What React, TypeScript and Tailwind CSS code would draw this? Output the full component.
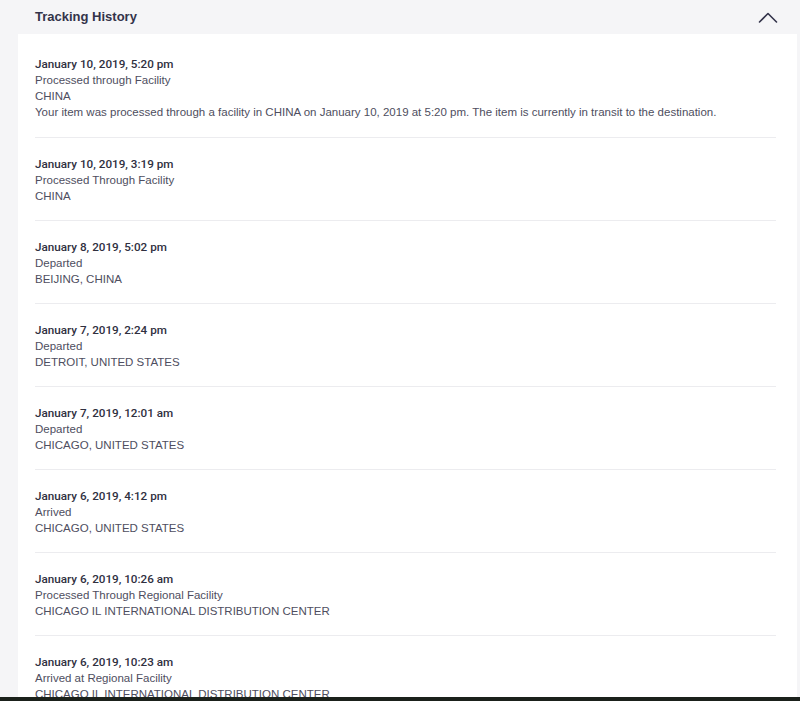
type Event = {
  date: string;
  status: string;
  location: string;
  detail?: string;
};

const EVENTS: Event[] = [
  {
    date: "January 10, 2019, 5:20 pm",
    status: "Processed through Facility",
    location: "CHINA",
    detail:
      "Your item was processed through a facility in CHINA on January 10, 2019 at 5:20 pm. The item is currently in transit to the destination.",
  },
  { date: "January 10, 2019, 3:19 pm", status: "Processed Through Facility", location: "CHINA" },
  { date: "January 8, 2019, 5:02 pm", status: "Departed", location: "BEIJING, CHINA" },
  { date: "January 7, 2019, 2:24 pm", status: "Departed", location: "DETROIT, UNITED STATES" },
  { date: "January 7, 2019, 12:01 am", status: "Departed", location: "CHICAGO, UNITED STATES" },
  { date: "January 6, 2019, 4:12 pm", status: "Arrived", location: "CHICAGO, UNITED STATES" },
  {
    date: "January 6, 2019, 10:26 am",
    status: "Processed Through Regional Facility",
    location: "CHICAGO IL INTERNATIONAL DISTRIBUTION CENTER",
  },
  {
    date: "January 6, 2019, 10:23 am",
    status: "Arrived at Regional Facility",
    location: "CHICAGO IL INTERNATIONAL DISTRIBUTION CENTER",
  },
];

export default function App() {
  return (
    <div
      className="h-[701px] flex flex-col overflow-hidden bg-[#f5f5f7]"
      style={{ fontFamily: '"Liberation Sans", Arial, sans-serif' }}
    >
      <div className="flex-1 overflow-hidden pl-[18px] pr-[3px]">
        {/* Header */}
        <div className="h-[34px] flex items-center justify-between pl-[17px] pr-[19px]">
          <h2 className="text-[13px] font-bold text-[#33334a]">Tracking History</h2>
          <svg width="20" height="11" viewBox="0 0 20 11" className="text-[#33334a]">
            <polyline
              points="1.5,10 10,1.5 18.5,10"
              fill="none"
              stroke="currentColor"
              strokeWidth="1.6"
              strokeLinecap="round"
              strokeLinejoin="round"
            />
          </svg>
        </div>

        {/* Events */}
        <div className="bg-white pl-[17px] pr-[21px] pt-[4px]">
          {EVENTS.map((ev, i) => (
            <div
              key={i}
              className={`${i === 0 ? "pt-[18px] pb-[17px]" : "pt-[18px] pb-[16px]"} border-b border-[#ececef] text-[11.5px] leading-[16px] text-[#4e4e60]`}
            >
              <div
                className="text-[11.7px] font-medium text-[#30303f]"
                style={{ fontFamily: "Roboto, Arial, sans-serif" }}
              >
                {ev.date}
              </div>
              <div>{ev.status}</div>
              <div>{ev.location}</div>
              {ev.detail && <div>{ev.detail}</div>}
            </div>
          ))}
        </div>
      </div>
      <div className="h-[4px] bg-[#1b211b]" />
    </div>
  );
}
